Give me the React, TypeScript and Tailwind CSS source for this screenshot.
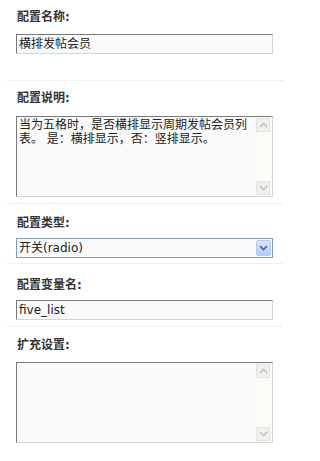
import React from 'react';

const font = { fontFamily: '"DejaVu Sans", "Noto Sans CJK SC", sans-serif' };

function Label({ children }: { children: React.ReactNode }) {
  return (
    <div className="text-[12px] leading-[12px] font-bold text-[#333]">{children}</div>
  );
}

function TextInput({ value }: { value: string }) {
  return (
    <div className="h-[20px] w-[257px] border border-t-[#7a7a7a] border-l-[#7a7a7a] border-r-[#d4d4d4] border-b-[#d4d4d4] bg-[#fafafa] px-[2px] text-[12px] leading-[18px] text-[#222]">
      {value}
    </div>
  );
}

function Chevron({ up, color }: { up?: boolean; color: string }) {
  return (
    <svg width="9" height="6" viewBox="0 0 9 6">
      <path
        d={up ? 'M1 5 L4.5 1.5 L8 5' : 'M1 1 L4.5 4.5 L8 1'}
        fill="none"
        stroke={color}
        strokeWidth="1.6"
      />
    </svg>
  );
}

function TextArea({ text }: { text?: string }) {
  return (
    <div className="flex h-[81px] w-[257px] border border-t-[#7a7a7a] border-l-[#7a7a7a] border-r-[#d4d4d4] border-b-[#d4d4d4] bg-[#fafafa]">
      <div className="flex-1 px-[2px] pt-[1px] text-[12px] leading-[14px] text-[#222]">{text}</div>
      <div className="flex w-[16px] flex-col justify-between bg-[#fbfbf8] py-[1px] pr-[1px]">
        <div className="flex h-[14px] w-[14px] items-center justify-center border border-[#e4e4de] bg-[#f1f1ec]">
          <Chevron up color="#c4c4c4" />
        </div>
        <div className="flex h-[14px] w-[14px] items-center justify-center border border-[#e4e4de] bg-[#f1f1ec]">
          <Chevron color="#c4c4c4" />
        </div>
      </div>
    </div>
  );
}

function Select({ value }: { value: string }) {
  return (
    <div className="flex h-[20px] w-[257px] items-center border border-[#7f9db9] bg-[#fafafa]">
      <div className="flex-1 px-[2px] text-[12px] leading-[18px] text-[#222]">{value}</div>
      <div className="mr-[1px] flex h-[16px] w-[15px] items-center justify-center rounded-[2px] border border-[#b7c9f5] bg-gradient-to-b from-[#dbe6fd] to-[#b5c9f7]">
        <Chevron color="#4d6185" />
      </div>
    </div>
  );
}

export default function App() {
  return (
    <div className="h-[461px] w-[283px] bg-white" style={font}>
      <div className="ml-[6px] border-b border-dotted border-[#e3e3e3] pl-[11px] pt-[11px] pb-[26px]">
        <Label>配置名称:</Label>
        <div className="mt-[11px] -ml-[1px]">
          <TextInput value="横排发帖会员" />
        </div>
      </div>
      <div className="ml-[6px] border-b border-[#f0f0f0] pl-[11px] pt-[11px] pb-[6px]">
        <Label>配置说明:</Label>
        <div className="mt-[12px] -ml-[1px]">
          <TextArea text="当为五格时，是否横排显示周期发帖会员列表。 是：横排显示，否：竖排显示。" />
        </div>
      </div>
      <div className="ml-[6px] border-b border-[#f0f0f0] pl-[11px] pt-[13px] pb-[5px]">
        <Label>配置类型:</Label>
        <div className="mt-[9px] -ml-[1px]">
          <Select value="开关(radio)" />
        </div>
      </div>
      <div className="ml-[6px] border-b border-[#f0f0f0] pl-[11px] pt-[15px] pb-[6px]">
        <Label>配置变量名:</Label>
        <div className="mt-[9px] -ml-[1px]">
          <TextInput value="five_list" />
        </div>
      </div>
      <div className="ml-[6px] pl-[11px] pt-[12px]">
        <Label>扩充设置:</Label>
        <div className="mt-[11px] -ml-[1px]">
          <TextArea />
        </div>
      </div>
    </div>
  );
}
